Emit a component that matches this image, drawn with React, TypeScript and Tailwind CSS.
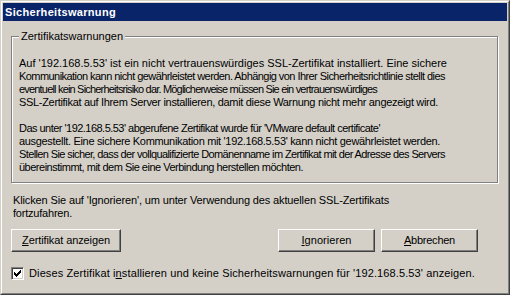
import React, { useLayoutEffect, useRef, useState } from "react";

const font = { fontFamily: '"Liberation Sans", Arial, sans-serif' };

function Fit({ w, children, className = "" }: { w: number; children: React.ReactNode; className?: string }) {
  const ref = useRef<HTMLSpanElement>(null);
  const [ls, setLs] = useState(0);
  useLayoutEffect(() => {
    const measure = () => {
      const el = ref.current;
      if (!el) return;
      el.style.letterSpacing = "0px";
      const nat = el.getBoundingClientRect().width;
      const n = (el.textContent || "").length || 1;
      const v = (w - nat) / n;
      el.style.letterSpacing = `${v}px`;
      setLs(v);
    };
    measure();
    if (document.fonts && document.fonts.ready) document.fonts.ready.then(measure);
  }, [w]);
  return (
    <span ref={ref} className={`inline-block whitespace-nowrap ${className}`} style={{ letterSpacing: `${ls}px` }}>
      {children}
    </span>
  );
}

function Line({ w, children }: { w: number; children: React.ReactNode }) {
  return (
    <div className="h-[13px] leading-[13px]">
      <Fit w={w}>{children}</Fit>
    </div>
  );
}

function Btn({ children, className }: { children: React.ReactNode; className: string }) {
  return (
    <div
      className={`h-[23px] flex items-center justify-center border border-t-white border-l-white border-r-[#404040] border-b-[#404040] shadow-[inset_-1px_-1px_0_#808080] text-[11px] leading-[13px] text-black ${className}`}
    >
      {children}
    </div>
  );
}

export default function App() {
  return (
    <div className="w-[510px] h-[295px] bg-[#d4d0c8] text-black" style={font}>
      <div className="w-full h-full border border-t-[#d4d0c8] border-l-[#d4d0c8] border-r-[#404040] border-b-[#404040]">
        <div className="w-full h-full border border-t-white border-l-white border-r-[#808080] border-b-[#808080] p-px flex flex-col">
          <div className="h-[18px] bg-[#0a246a] flex items-center pl-[2px]">
            <Fit w={111} className="text-white font-bold text-[11px] leading-none">Sicherheitswarnung</Fit>
          </div>
          <div className="flex-1 flex flex-col pl-[8px] pr-[9px]">
            <div className="relative mt-[15px] h-[147px] border border-[#808080] shadow-[inset_1px_1px_0_#fff,1px_1px_0_#fff] pl-[7px] pt-[20px] text-[11px] leading-[13px] whitespace-nowrap">
              <span className="absolute left-[7px] top-[-7px] px-[2px] bg-[#d4d0c8] leading-[13px]">
                <Fit w={102}>Zertifikatswarnungen</Fit>
              </span>
              <Line w={428}>Auf '192.168.5.53' ist ein nicht vertrauenswürdiges SSL-Zertifikat installiert. Eine sichere</Line>
              <Line w={426}>Kommunikation kann nicht gewährleistet werden. Abhängig von Ihrer Sicherheitsrichtlinie stellt dies</Line>
              <Line w={358}>eventuell kein Sicherheitsrisiko dar. Möglicherweise müssen Sie ein vertrauenswürdiges</Line>
              <Line w={419}>SSL-Zertifikat auf Ihrem Server installieren, damit diese Warnung nicht mehr angezeigt wird.</Line>
              <div className="h-[13px]" />
              <Line w={361}>Das unter '192.168.5.53' abgerufene Zertifikat wurde für 'VMware default certificate'</Line>
              <Line w={421}>ausgestellt. Eine sichere Kommunikation mit '192.168.5.53' kann nicht gewährleistet werden.</Line>
              <Line w={426}>Stellen Sie sicher, dass der vollqualifizierte Domänenname im Zertifikat mit der Adresse des Servers</Line>
              <Line w={284}>übereinstimmt, mit dem Sie eine Verbindung herstellen möchten.</Line>
            </div>
            <div className="mt-[11px] text-[11px] leading-[13px] pl-[2px]">
              <Line w={376}>Klicken Sie auf 'Ignorieren', um unter Verwendung des aktuellen SSL-Zertifikats</Line>
              <Line w={59}>fortzufahren.</Line>
            </div>
            <div className="mt-[9px] flex items-center">
              <Btn className="w-[110px]">
                <Fit w={88}><u>Z</u>ertifikat anzeigen</Fit>
              </Btn>
              <div className="flex-1" />
              <Btn className="w-[97px]">
                <Fit w={50}><u>I</u>gnorieren</Fit>
              </Btn>
              <Btn className="w-[97px] ml-[6px] mr-[20px]">
                <Fit w={51}><u>A</u>bbrechen</Fit>
              </Btn>
            </div>
            <div className="mt-[15px] flex items-center text-[11px] leading-[13px] whitespace-nowrap">
              <div className="w-[13px] h-[13px] bg-white border border-t-[#808080] border-l-[#808080] border-r-white border-b-white shadow-[inset_1px_1px_0_#404040,inset_-1px_-1px_0_#d4d0c8] flex items-center justify-center">
                <svg width="7" height="7" viewBox="0 0 7 7" shapeRendering="crispEdges">
                  <path d="M0 2h1v3h-1zM1 3h1v3h-1zM2 4h1v3h-1zM3 3h1v3h-1zM4 2h1v3h-1zM5 1h1v3h-1zM6 0h1v3h-1z" fill="#000" />
                </svg>
              </div>
              <span className="ml-[5px]">
                <Fit w={446}>
                  Dieses Zertifikat i<u>n</u>stallieren und keine Sicherheitswarnungen für '192.168.5.53' anzeigen.
                </Fit>
              </span>
            </div>
          </div>
        </div>
      </div>
    </div>
  );
}
